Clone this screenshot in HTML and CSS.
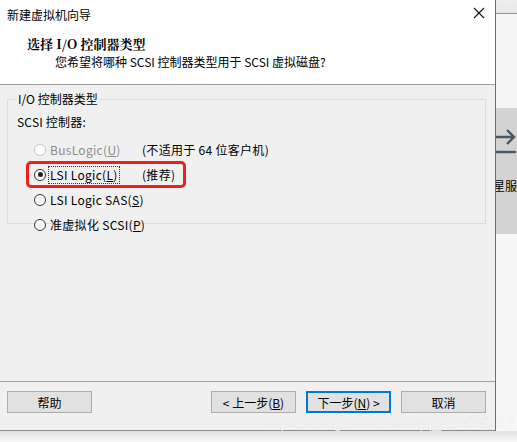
FILE: index.html
```html
<!DOCTYPE html>
<html lang="zh-CN">
  <head>
    <meta charset="UTF-8" />
    <title>新建虚拟机向导</title>
    <link rel="stylesheet" href="styles.css">
  </head>
  <body>
    <div class="screen">
      <div class="dialog">
        <div class="titlebar">
          <span class="title">新建虚拟机向导</span>
          <span class="close">
            <svg width="12" height="12" viewBox="0 0 12 12">
              <path d="M1 1 L11 11 M11 1 L1 11" stroke="#111" stroke-width="1.1" />
            </svg>
          </span>
        </div>
        <div class="header">
          <div class="head-title">选择 I/O 控制器类型</div>
          <div class="head-sub">您希望将哪种 SCSI 控制器类型用于 SCSI 虚拟磁盘?</div>
        </div>
        <div class="body">
          <fieldset class="group">
            <legend>I/O 控制器类型</legend>
            <div class="label">SCSI 控制器:</div>
            <div class="options">
              <div class="option disabled">
                <span class="radio"></span>
                <span class="opt-text">BusLogic(<u>U</u>)</span>
                <span class="note">(不适用于 64 位客户机)</span>
              </div>
              <div class="option marked">
                <span class="radio checked"></span>
                <span class="opt-text focus">LSI Logic(<u>L</u>)</span>
                <span class="note">(推荐)</span>
              </div>
              <div class="option">
                <span class="radio"></span>
                <span class="opt-text">LSI Logic SAS(<u>S</u>)</span>
              </div>
              <div class="option">
                <span class="radio"></span>
                <span class="opt-text">准虚拟化 SCSI(<u>P</u>)</span>
              </div>
            </div>
          </fieldset>
        </div>
        <div class="footer">
          <button class="btn">帮助</button>
          <div class="spacer"></div>
          <button class="btn">&lt; 上一步(<u>B</u>)</button>
          <button class="btn primary">下一步(<u>N</u>) &gt;</button>
          <button class="btn">取消</button>
        </div>
      </div>
      <div class="behind">
        <div class="behind-top"></div>
        <div class="behind-light"></div>
        <div class="behind-panel">
          <svg class="arrow" width="20" height="30" viewBox="0 0 20 30">
            <path d="M0 8 H18 M11 1 L18 8 L11 15" stroke="#4a5866" stroke-width="2.4" fill="none" />
            <path d="M0 23 H20" stroke="#4a5866" stroke-width="2.4" />
          </svg>
          <span class="behind-text">星服</span>
        </div>
        <div class="behind-bottom"></div>
      </div>
    </div>
    <div class="shadow-strip"></div>
    <div class="watermark">https://blog.csdn.net/qq_38417282</div>
  </body>
</html>
```
FILE: styles.css
```css
html, body {
  margin: 0;
  padding: 0;
}

body {
  width: 517px;
  height: 442px;
  overflow: hidden;
  position: relative;
  background: #f4f4f4;
  font-family: "Noto Sans CJK SC", "Noto Sans", sans-serif;
  font-size: 12px;
  color: #000;
}

.screen {
  display: flex;
  height: 431px;
}

.dialog {
  width: 496px;
  border-right: 1px solid #6f6f6f;
  border-bottom: 1px solid #8a8a8a;
  display: flex;
  flex-direction: column;
  background: #f0f0f0;
}

.titlebar {
  height: 28px;
  background: #fff;
  display: flex;
  align-items: center;
  justify-content: space-between;
  padding: 0 10px 0 7px;
}

.close {
  display: flex;
  align-items: center;
  margin-top: -2px;
}

.header {
  height: 56px;
  background: #fff;
  border-bottom: 1px solid #a0a0a0;
  padding-left: 27px;
}

.head-title {
  font-family: "Noto Serif CJK SC", "Noto Sans CJK SC", serif;
  font-weight: bold;
  font-size: 13px;
  line-height: 18px;
  padding-top: 7px;
}

.head-sub {
  padding-left: 28px;
  line-height: 18px;
}

.body {
  flex: 1;
  padding: 7px 9px 0 7px;
  border-bottom: 1px solid #a0a0a0;
}

.group {
  margin: 0;
  height: 130px;
  border: 1px solid #dcdcdc;
  padding: 0 0 0 9px;
}

.group legend {
  padding: 0 1px;
  margin-left: 0;
  line-height: 14px;
}

.label {
  line-height: 18px;
  margin-top: 7px;
  letter-spacing: 0.2px;
}

.options {
  display: flex;
  flex-direction: column;
  margin-top: 6px;
  margin-left: 17px;
}

.option {
  display: flex;
  align-items: center;
  height: 25px;
  position: relative;
}

.option.disabled .opt-text {
  color: #8d8d8d;
}

.option.marked::after {
  content: "";
  position: absolute;
  left: -8px;
  top: -1px;
  width: 160px;
  height: 27px;
  border: 3px solid #f01d1d;
  border-radius: 5px;
  box-sizing: border-box;
}

.radio {
  width: 12px;
  height: 12px;
  border: 1px solid #333;
  border-radius: 50%;
  background: #fff;
  box-sizing: border-box;
  position: relative;
  margin-right: 3px;
}

.option.disabled .radio {
  border-color: #c4c4c4;
}

.radio.checked::after {
  content: "";
  position: absolute;
  left: 2.5px;
  top: 2.5px;
  width: 5px;
  height: 5px;
  border-radius: 50%;
  background: #222;
}

.opt-text {
  line-height: 16px;
  padding: 0 1px;
  letter-spacing: 0.3px;
}

.opt-text.focus {
  outline: 1px dotted #333;
}

.note {
  position: absolute;
  left: 108px;
  line-height: 16px;
  letter-spacing: 0.3px;
}

.footer {
  height: 39px;
  display: flex;
  align-items: flex-start;
  padding: 9px 9px 0 7px;
  gap: 10px;
}

.spacer {
  flex: 1;
}

.btn {
  width: 85px;
  height: 22px;
  background: #e1e1e1;
  border: 1px solid #adadad;
  font-family: inherit;
  font-size: 12px;
  padding: 0;
  color: #000;
}

.btn.primary {
  border: 2px solid #0078d7;
}

.behind {
  flex: 1;
  display: flex;
  flex-direction: column;
}

.behind-top {
  height: 13px;
  background: linear-gradient(#eeeeee, #e8e8e8);
  border-bottom: 1px solid #6a9cc8;
}

.behind-light {
  height: 94px;
  background: #f5f5f5;
}

.behind-panel {
  height: 126px;
  background: #d3d3d3;
  display: flex;
  flex-direction: column;
  overflow: hidden;
}

.arrow {
  margin-top: 21px;
}

.behind-text {
  margin-top: 18px;
  margin-left: -3px;
  white-space: nowrap;
}

.behind-bottom {
  flex: 1;
  background: #f7f7f7;
}

.shadow-strip {
  height: 11px;
  background: linear-gradient(#e2e2e2, #f8f8f8);
}

.watermark {
  position: absolute;
  left: 262px;
  top: 414px;
  font-family: "Liberation Sans", sans-serif;
  font-size: 16px;
  color: rgba(255, 255, 255, 0.75);
  text-shadow: 0 0 1px rgba(0, 0, 0, 0.12);
  letter-spacing: 0.2px;
  white-space: nowrap;
}
```
